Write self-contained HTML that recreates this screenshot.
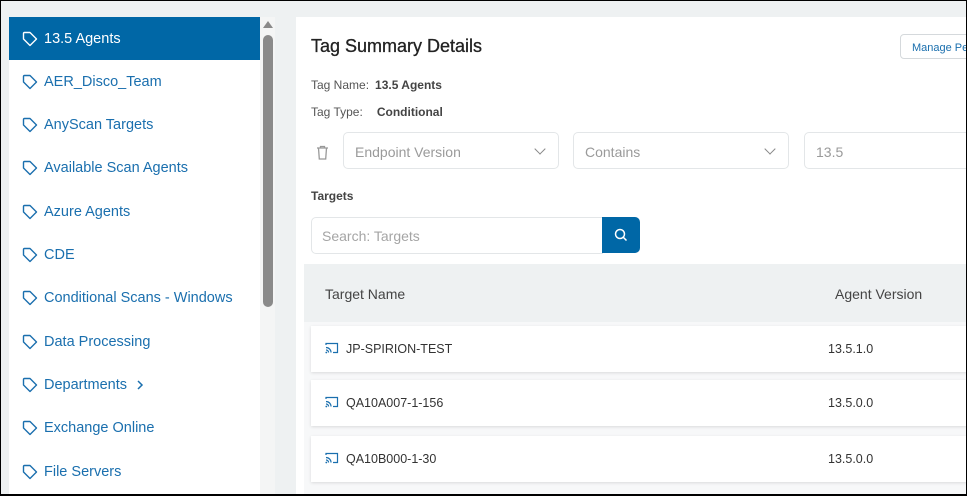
<!DOCTYPE html>
<html><head><meta charset="utf-8"><style>
*{box-sizing:border-box;margin:0;padding:0}
body{width:967px;height:496px;overflow:hidden;background:#eef1f2;font-family:"Liberation Sans",sans-serif;position:relative}
.frame{position:absolute;left:0;top:0;width:967px;height:496px;border:1px solid #000;border-bottom-width:2px;z-index:10;pointer-events:none}
.left{position:absolute;left:9px;top:17px;width:266px;height:479px;background:#fff}
.track{position:absolute;left:251px;top:0;width:15px;height:479px;background:#f4f5f5}
.thumb{position:absolute;left:254px;top:18px;width:10px;height:272px;background:#8a8a8a;border-radius:5px}
.arrow{position:absolute;left:254px;top:4px;width:0;height:0;border-left:5px solid transparent;border-right:5px solid transparent;border-bottom:7px solid #8a8a8a}
.item{position:absolute;left:0;width:251px;height:43px;display:flex;align-items:center;padding-left:13px;font-size:14.5px;color:#1a6fae}
.item svg{margin-right:6px}
.item.sel{background:#0067a6;color:#fff}
.right{position:absolute;left:296px;top:17px;width:671px;height:479px;background:#fff}
h1{position:absolute;left:15px;top:19px;font-size:18px;font-weight:normal;color:#222;-webkit-text-stroke:.3px #222}
.btn{position:absolute;left:604px;top:17px;width:80px;height:25px;border:1px solid #d5d9dc;border-radius:4px;font-size:11px;color:#1a6fae;padding:7px 0 0 11px}
.lbl{position:absolute;font-size:12px;color:#555}
.lbl b{color:#444;margin-left:6px}
.sel2{position:absolute;top:115px;height:37px;border:1px solid #e3e6e8;border-radius:5px;font-size:14px;color:#9a9a9a;padding:11px 0 0 11px}
.chev{position:absolute;right:14px;top:12px;width:8px;height:8px;border-right:1px solid #888;border-bottom:1px solid #888;transform:rotate(45deg)}
.search{position:absolute;left:15px;top:200px;width:292px;height:37px;border:1px solid #e3e6e8;border-radius:5px 0 0 5px;font-size:14px;color:#a5a5a5;padding:10px 0 0 10px}
.sbtn{position:absolute;left:306px;top:200px;width:38px;height:36px;background:#0067a6;border-radius:0 5px 5px 0;display:flex;align-items:center;justify-content:center}
.tarea{position:absolute;left:8px;top:247px;width:663px;height:232px;background:#f7f8f9}
.thead{position:absolute;left:8px;top:247px;width:663px;height:58px;background:#eef1f2;font-size:14px;color:#444}
.row{position:absolute;left:15px;width:656px;height:46px;background:#fff;box-shadow:0 1px 3px rgba(0,0,0,.12);font-size:12.5px;color:#333}
.row .n{position:absolute;left:35px;top:16px}
.row .v{position:absolute;left:517px;top:16px}
.row svg{position:absolute;left:14px;top:16px}
</style></head><body>
<div class="frame"></div>
<div class="left">
<div class="track"></div><div class="arrow"></div><div class="thumb"></div>
<div class="item sel" style="top:0">
<svg width="16" height="16" viewBox="0 0 16 16"><path d="M1.5 2.5Q1.5 1.5 2.5 1.5H8L14.5 8 8 14.5 1.5 8z" fill="none" stroke="#fff" stroke-width="1.4" stroke-linejoin="round"/></svg>13.5 Agents</div>
</div>
<div class="right">
<h1>Tag Summary Details</h1>
<div class="btn">Manage Pe</div>
<div class="lbl" style="left:15px;top:61px">Tag Name:<b>13.5 Agents</b></div>
<div class="lbl" style="left:15px;top:88px">Tag Type:<b style="margin-left:14px">Conditional</b></div>
<svg style="position:absolute;left:20px;top:128px" width="13" height="15" viewBox="0 0 13 15"><path d="M1 3h11M4.5 3V1.5h4V3M2.5 3l.8 11h6.4l.8-11" fill="none" stroke="#999" stroke-width="1.3"/></svg>
<div class="sel2" style="left:47px;width:216px">Endpoint Version<div class="chev"></div></div>
<div class="sel2" style="left:277px;width:216px">Contains<div class="chev"></div></div>
<div class="sel2" style="left:508px;width:170px">13.5</div>
<div class="lbl" style="left:15px;top:172px;font-weight:bold;color:#444">Targets</div>
<div class="search">Search: Targets</div>
<div class="sbtn"><svg width="14" height="14" viewBox="0 0 14 14"><circle cx="6" cy="6" r="4.5" fill="none" stroke="#fff" stroke-width="1.5"/><path d="M9.5 9.5l3 3" stroke="#fff" stroke-width="1.5"/></svg></div>
<div class="tarea"></div>
<div class="thead"><span style="position:absolute;left:21px;top:22px">Target Name</span><span style="position:absolute;left:531px;top:22px">Agent Version</span></div>
</div>
<script>
var names=["AER_Disco_Team","AnyScan Targets","Available Scan Agents","Azure Agents","CDE","Conditional Scans - Windows","Data Processing","Departments","Exchange Online","File Servers"];
var L=document.querySelector('.left'),h='';
names.forEach(function(n,i){var c=n=="Departments"?'<svg style="margin-left:9px" width="8" height="10" viewBox="0 0 8 10"><path d="M2 1l4 4-4 4" fill="none" stroke="#1a6fae" stroke-width="1.5"/></svg>':'';
h+='<div class="item" style="top:'+(43.3*(i+1))+'px"><svg width="16" height="16" viewBox="0 0 16 16"><path d="M1.5 2.5Q1.5 1.5 2.5 1.5H8L14.5 8 8 14.5 1.5 8z" fill="none" stroke="#1a6fae" stroke-width="1.4" stroke-linejoin="round"/></svg>'+n+c+'</div>';});
L.insertAdjacentHTML('beforeend',h);
var R=document.querySelector('.right'),rows=[["JP-SPIRION-TEST","13.5.1.0",309],["QA10A007-1-156","13.5.0.0",363],["QA10B000-1-30","13.5.0.0",419]],r='';
rows.forEach(function(x){r+='<div class="row" style="top:'+x[2]+'px"><svg width="14" height="12" viewBox="0 0 14 12"><path d="M1 3V1.5h11.5v9H8" fill="none" stroke="#1a6fae" stroke-width="1.2"/><path d="M1 5.5a5 5 0 0 1 5 5M1 8a2.5 2.5 0 0 1 2.5 2.5" fill="none" stroke="#1a6fae" stroke-width="1.2"/><circle cx="1.3" cy="10.5" r=".9" fill="#1a6fae"/></svg><span class="n">'+x[0]+'</span><span class="v">'+x[1]+'</span></div>';});
R.insertAdjacentHTML('beforeend',r);
</script>
</body></html>
